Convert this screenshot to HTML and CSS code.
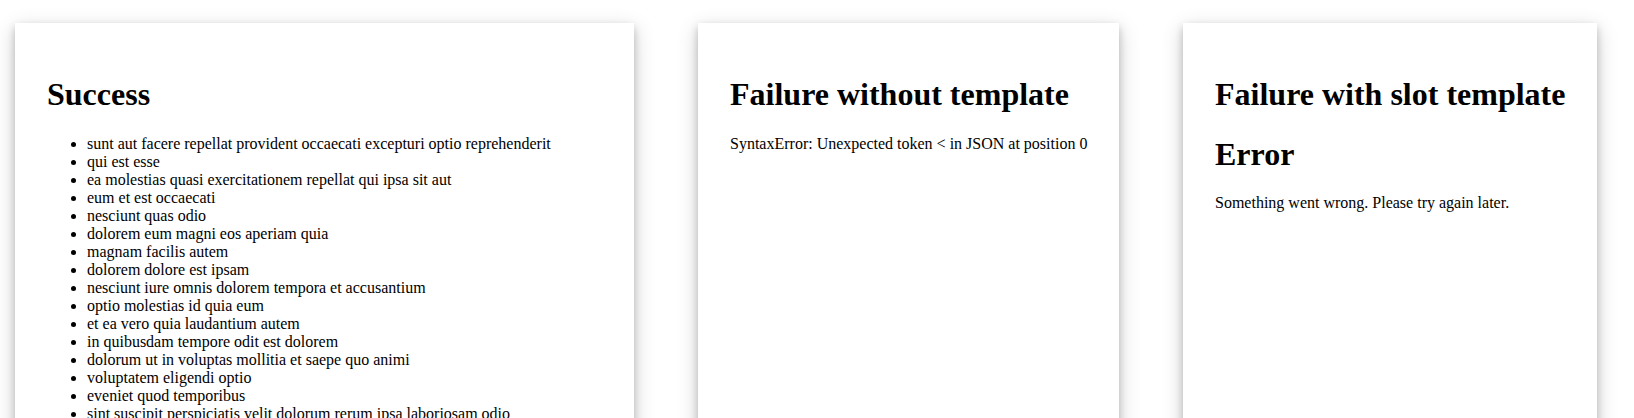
FILE: index.html
```html
<!DOCTYPE html>
<html lang="en">
<head>
<meta charset="utf-8">
<title>Fetch demo</title>
<link rel="stylesheet" href="styles.css">
</head>
<body>
<main class="board">
  <section class="card card-success">
    <h1 class="card-title">Success</h1>
    <ul class="post-list">
      <li>sunt aut facere repellat provident occaecati excepturi optio reprehenderit</li>
      <li>qui est esse</li>
      <li>ea molestias quasi exercitationem repellat qui ipsa sit aut</li>
      <li>eum et est occaecati</li>
      <li>nesciunt quas odio</li>
      <li>dolorem eum magni eos aperiam quia</li>
      <li>magnam facilis autem</li>
      <li>dolorem dolore est ipsam</li>
      <li>nesciunt iure omnis dolorem tempora et accusantium</li>
      <li>optio molestias id quia eum</li>
      <li>et ea vero quia laudantium autem</li>
      <li>in quibusdam tempore odit est dolorem</li>
      <li>dolorum ut in voluptas mollitia et saepe quo animi</li>
      <li>voluptatem eligendi optio</li>
      <li>eveniet quod temporibus</li>
      <li>sint suscipit perspiciatis velit dolorum rerum ipsa laboriosam odio</li>
      <li>fugit voluptas sed molestias voluptatem provident</li>
      <li>voluptate et itaque vero tempora molestiae</li>
      <li>adipisci placeat illum aut reiciendis qui</li>
      <li>doloribus ad provident suscipit at</li>
    </ul>
  </section>
  <section class="card card-plain">
    <h1 class="card-title">Failure without template</h1>
    <p class="card-text">SyntaxError: Unexpected token &lt; in JSON at position 0</p>
  </section>
  <section class="card card-slot">
    <h1 class="card-title">Failure with slot template</h1>
    <h1 class="card-title">Error</h1>
    <p class="card-text">Something went wrong. Please try again later.</p>
  </section>
</main>
</body>
</html>
```

FILE: styles.css
```css
html, body {
  margin: 0;
  background: #ffffff;
}

body {
  font-family: "Liberation Serif", "Times New Roman", serif;
  font-size: 16px;
  color: #000;
}

.board {
  display: flex;
  align-items: stretch;
  gap: 64px;
  padding: 23px 0 40px 15px;
}

.card {
  box-sizing: border-box;
  flex: 0 0 auto;
  background: #fff;
  padding: 32px 26px 30px 32px;
  box-shadow: 0 4px 8px 0 rgba(0, 0, 0, 0.2), 0 6px 20px 0 rgba(0, 0, 0, 0.19);
  min-height: 900px;
}

.card-success { width: 619px; }
.card-plain { width: 421px; }
.card-slot { width: 414px; }

.card-title {
  font-size: 32px;
  font-weight: bold;
  margin: 21.44px 0;
  white-space: nowrap;
}

.card-title + .card-title {
  margin-top: 22.5px;
}

.post-list {
  margin: 16px 0;
  padding-left: 40px;
}

.card-text {
  margin: 16px 0;
  white-space: nowrap;
}
```
